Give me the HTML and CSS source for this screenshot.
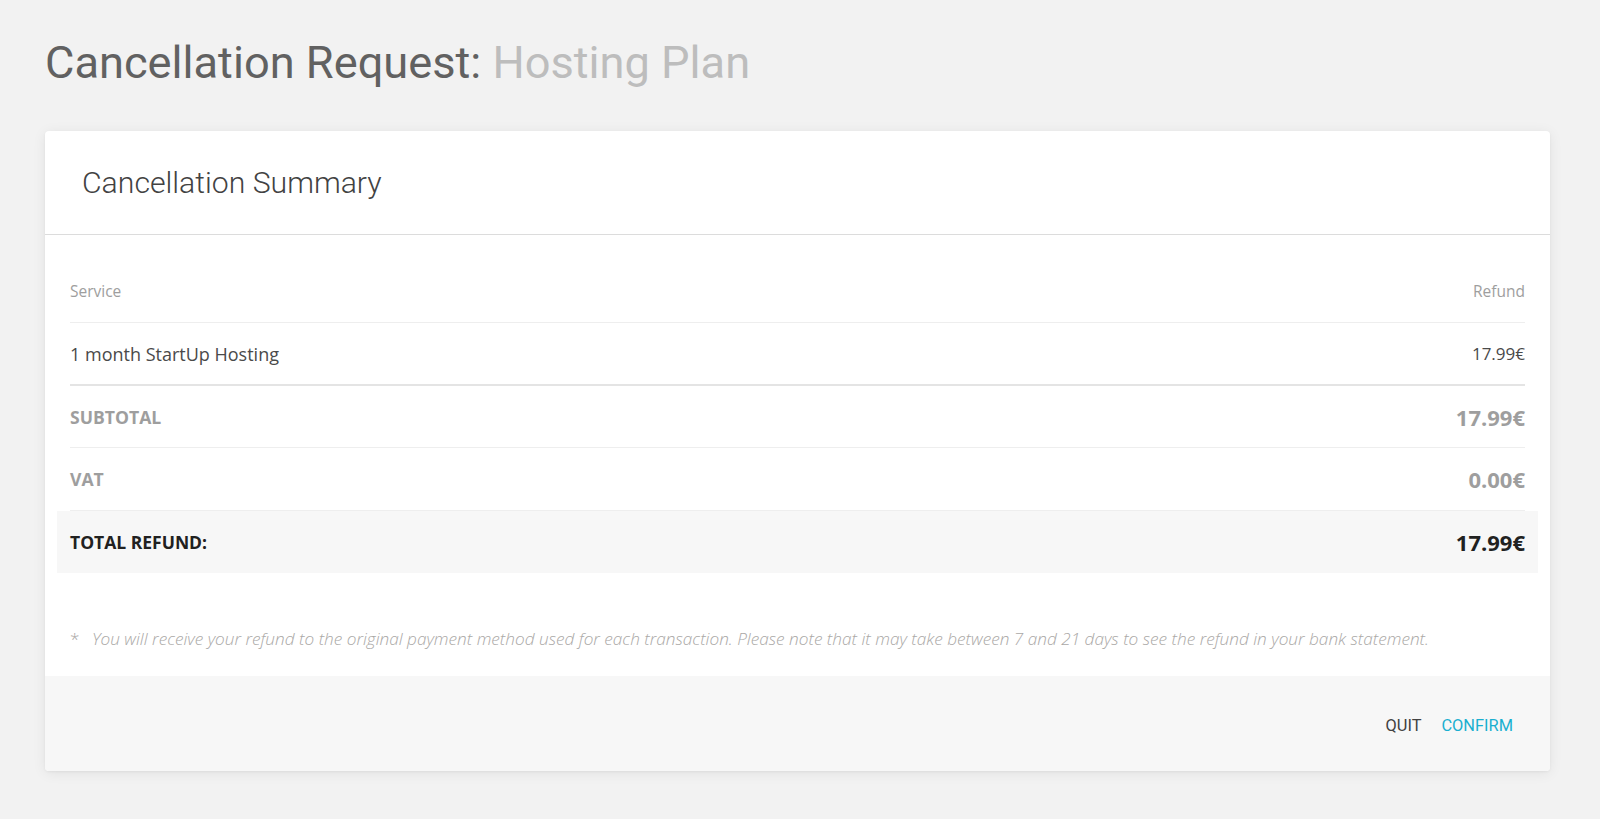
FILE: index.html
```html
<!DOCTYPE html>
<html lang="en">
<head>
<meta charset="utf-8">
<title>Cancellation Request</title>
<link rel="stylesheet" href="styles.css">
</head>
<body>
<main class="page">
  <h1 class="page-title">Cancellation Request: <span class="page-title-sub">Hosting Plan</span></h1>
  <section class="card">
    <header class="card-header">
      <h2 class="card-title">Cancellation Summary</h2>
    </header>
    <div class="summary">
      <div class="row row-head">
        <span>Service</span>
        <span>Refund</span>
      </div>
      <div class="row row-item">
        <span class="item-name">1 month StartUp Hosting</span>
        <span>17.99€</span>
      </div>
      <div class="row row-sub">
        <span>SUBTOTAL</span>
        <span class="amount">17.99€</span>
      </div>
      <div class="row row-sub row-vat">
        <span>VAT</span>
        <span class="amount">0.00€</span>
      </div>
      <div class="row row-total">
        <span>TOTAL REFUND:</span>
        <span class="amount">17.99€</span>
      </div>
    </div>
    <p class="note"><span class="note-star">*</span>You will receive your refund to the original payment method used for each transaction. Please note that it may take between 7 and 21 days to see the refund in your bank statement.</p>
    <footer class="card-footer">
      <button class="btn btn-quit" type="button">Quit</button>
      <button class="btn btn-confirm" type="button">Confirm</button>
    </footer>
  </section>
</main>
</body>
</html>
```

FILE: styles.css
```css
html, body {
  margin: 0;
  padding: 0;
}

body {
  background: #f2f2f2;
  font-family: "Open Sans", "Liberation Sans", sans-serif;
  color: #424242;
}

.page {
  padding: 36px 50px 40px 45px;
}

.page-title {
  margin: 0 0 41px 0;
  font-family: Roboto, "Liberation Sans", sans-serif;
  font-weight: 400;
  font-size: 45.2px;
  line-height: 54px;
  color: #616161;
}

.page-title-sub {
  color: #bdbdbd;
}

.card {
  background: #ffffff;
  border-radius: 4px;
  box-shadow: 0 2px 14px rgba(0, 0, 0, 0.07), 0 1px 3px rgba(0, 0, 0, 0.05);
  overflow: hidden;
}

.card-header {
  padding: 34px 37px 33px 37px;
  border-bottom: 1px solid #dcdcdc;
}

.card-title {
  margin: 0;
  font-family: Roboto, "Liberation Sans", sans-serif;
  font-weight: 300;
  font-size: 30.2px;
  line-height: 36px;
  color: #424242;
}

.summary {
  padding: 25px 12px 0 12px;
  display: flex;
  flex-direction: column;
}

.row {
  display: flex;
  justify-content: space-between;
  align-items: center;
  margin: 0 13px;
  height: 61px;
  border-bottom: 1px solid #eeeeee;
}

.row-head {
  height: 62px;
  font-size: 15.5px;
  color: #9e9e9e;
}

.row-item {
  font-size: 17px;
  color: #4a4a4a;
  border-bottom: 2px solid #e4e4e4;
}

.item-name {
  font-size: 18px;
}

.row-sub {
  font-size: 17.6px;
  font-weight: 700;
  color: #9e9e9e;
}

.row-vat {
  height: 62px;
}

.row-sub .amount {
  font-size: 22px;
  font-weight: 700;
}

.row-total {
  margin: 0;
  padding: 0 13px;
  height: 62px;
  border-bottom: none;
  background: #f7f7f7;
  font-size: 17.5px;
  font-weight: 700;
  color: #212121;
}

.row-total .amount {
  font-size: 22px;
  font-weight: 700;
}

.note {
  margin: 0;
  padding: 53px 25px 25px 25px;
  font-size: 17.2px;
  line-height: 25px;
  font-weight: 300;
  font-style: italic;
  color: #aaa8a6;
}

.note-star {
  display: inline-block;
  width: 22px;
  font-style: normal;
}

.card-footer {
  background: #f7f7f7;
  height: 95px;
  box-sizing: border-box;
  display: flex;
  justify-content: flex-end;
  align-items: center;
  gap: 4px;
  padding: 4px 29px 0 29px;
}

.btn {
  border: none;
  background: transparent;
  padding: 0 8px;
  font-family: Roboto, "Liberation Sans", sans-serif;
  font-size: 16.4px;
  font-weight: 400;
  text-transform: uppercase;
  line-height: 36px;
  cursor: pointer;
}

.btn-quit {
  color: #424242;
}

.btn-confirm {
  color: #1aafd0;
}
```
